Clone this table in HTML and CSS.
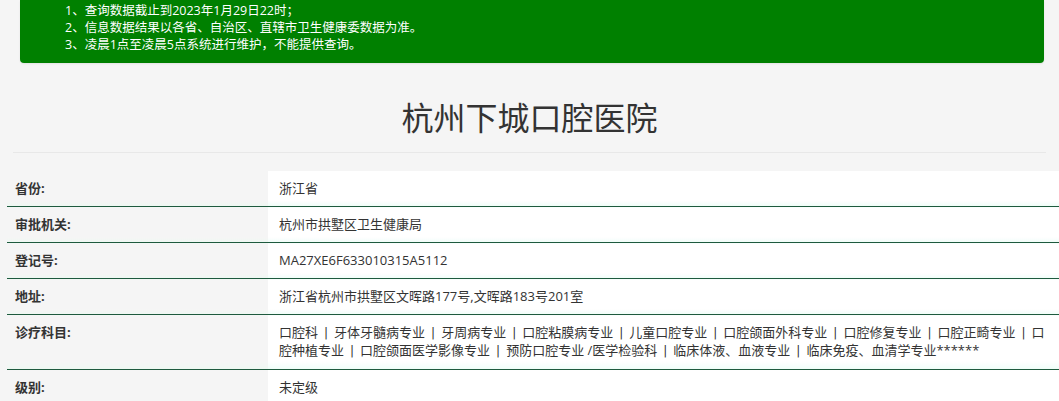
FILE: index.html
```html
<!DOCTYPE html>
<html lang="zh-CN">
<head>
<meta charset="utf-8">
<title>杭州下城口腔医院</title>
<link rel="stylesheet" href="styles.css">
</head>
<body>
<div class="notice">
  <p>1、查询数据截止到2023年1月29日22时；</p>
  <p>2、信息数据结果以各省、自治区、直辖市卫生健康委数据为准。</p>
  <p>3、凌晨1点至凌晨5点系统进行维护，不能提供查询。</p>
</div>
<h1 class="title">杭州下城口腔医院</h1>
<table class="info">
  <tr><th>省份:</th><td>浙江省</td></tr>
  <tr><th>审批机关:</th><td>杭州市拱墅区卫生健康局</td></tr>
  <tr><th>登记号:</th><td>MA27XE6F633010315A5112</td></tr>
  <tr><th>地址:</th><td>浙江省杭州市拱墅区文晖路177号,文晖路183号201室</td></tr>
  <tr><th>诊疗科目:</th><td>口腔科<span class="sep">|</span>牙体牙髓病专业<span class="sep">|</span>牙周病专业<span class="sep">|</span>口腔粘膜病专业<span class="sep">|</span>儿童口腔专业<span class="sep">|</span>口腔颌面外科专业<span class="sep">|</span>口腔修复专业<span class="sep">|</span>口腔正畸专业<span class="sep">|</span>口腔种植专业<span class="sep">|</span>口腔颌面医学影像专业<span class="sep">|</span>预防口腔专业 /医学检验科<span class="sep">|</span>临床体液、血液专业<span class="sep">|</span>临床免疫、血清学专业******</td></tr>
  <tr class="last"><th>级别:</th><td>未定级</td></tr>
</table>
</body>
</html>
```
FILE: styles.css
```css
html, body {
  margin: 0;
  padding: 0;
  background: #f5f5f5;
  overflow: hidden;
  font-family: "Open Sans", "Noto Sans CJK SC", sans-serif;
  color: #333;
}
.notice {
  margin: 0 15px 0 20px;
  padding: 2px 0 10px 45px;
  background: #008000;
  color: #fff;
  font-size: 12.5px;
  line-height: 17px;
  border-radius: 0 0 4px 4px;
  box-shadow: 0 1px 2px rgba(0,0,0,0.08);
}
.notice p {
  margin: 0;
}
.title {
  margin: 0 13px 0 13px;
  padding: 29px 0 12px;
  text-align: center;
  font-family: "Noto Sans CJK SC", sans-serif;
  font-weight: 400;
  font-size: 32px;
  line-height: 48px;
  color: #333;
  border-bottom: 1px solid #e8e8e8;
}
.info {
  margin: 18px 0 0 7px;
  width: calc(100% - 7px);
  border-collapse: collapse;
  font-size: 13px;
  line-height: 17px;
}
.info th, .info td {
  padding: 9px 8px 9px 8px;
  vertical-align: top;
  border-bottom: 1px solid #1e5a3e;
  text-align: left;
}
.info th {
  width: 245px;
  font-weight: 700;
  background: linear-gradient(to bottom, #f5f5f5 85%, #eef8f2);
}
.info td {
  padding-left: 11px;
  background: linear-gradient(to bottom, #fff 85%, #effdf8);
}
.sep {
  margin: 0 6px;
  font-family: "DejaVu Sans", sans-serif;
  font-size: 12px;
}
.info tr.last th, .info tr.last td {
  border-bottom: none;
}
.info tr.last th { background: #f5f5f5; }
.info tr.last td { background: #fff; }
```
